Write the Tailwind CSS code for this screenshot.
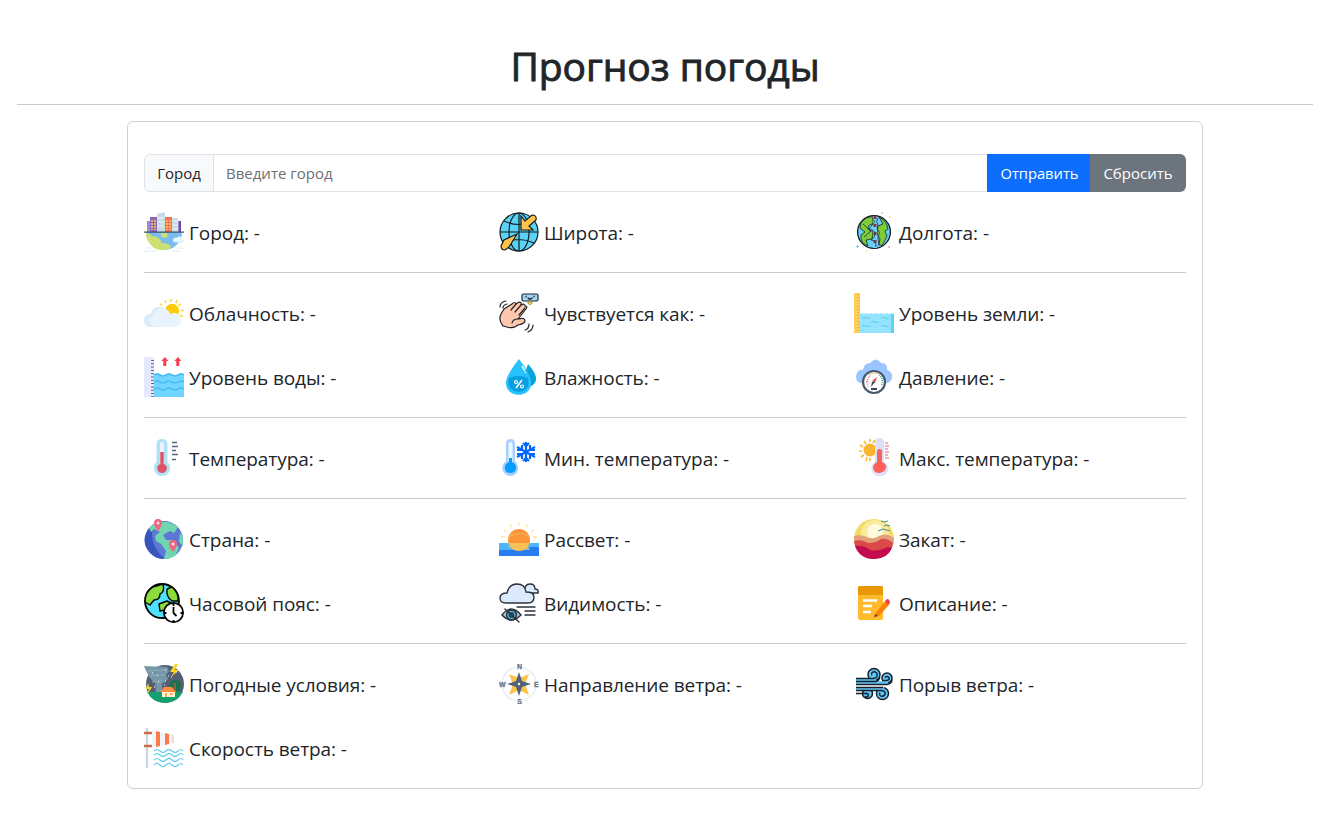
<!DOCTYPE html>
<html lang="ru">
<head>
<meta charset="utf-8">
<title>Прогноз погоды</title>
<script src="https://cdn.jsdelivr.net/npm/@tailwindcss/browser@4"></script>
</head>
<body class="bg-white text-[#212529] font-['Open_Sans','Noto_Sans',sans-serif]">
<div class="w-[1330px] pl-[17px] pr-[17px] pt-10">
<h1 class="text-center text-[39px] leading-[48px] h-12 font-normal tracking-[-0.05px] pt-[2px] [-webkit-text-stroke:0.9px_#212529]">Прогноз погоды</h1>
<hr class="mt-4 border-[#c8c9ca]">
<main class="mx-auto mt-4 w-[1076px] h-[668px] rounded-md border border-[#d0d1d3] px-4 pt-8">
<form class="flex h-[38px] text-[15px] leading-[36px]">
<label class="w-[70px] rounded-l-md border border-[#dee2e6] bg-[#f8f9fa] text-center">Город</label>
<div class="flex-1 border-y border-[#dee2e6] px-3 text-[#6b7075] text-[15px]">Введите город</div>
<button type="button" class="w-[103px] bg-[#0d6efd] text-white text-[14.7px] pl-0.5">Отправить</button>
<button type="button" class="w-24 rounded-r-md bg-[#6c757d] text-white">Сбросить</button>
</form>

<section class="mt-4 grid grid-cols-[331px_331px_332px] gap-x-6 gap-y-4 text-[19px] tracking-[-0.05px] [&>div]:flex [&>div]:h-12 [&>div]:items-center [&>div]:gap-[5px] [&_svg]:size-10 [&_svg]:shrink-0 [&_span]:pt-0.5 [&_span]:whitespace-nowrap">
<div><svg viewBox="0 0 40 40"><path d="M2 20h36A18 18 0 0 1 2 20Z" fill="#7bbcf0"/><path d="M2 21q4 0 6 3l5 1q5 3 4 6 6 0 9 2 2 2-1 4-12 4-19-5Q2 27 2 21M17 21h6q2 4-2 5-5 0-4-5" fill="#cfe070"/><path d="M3 9h3v11H3zM34 9h3v11h-3z" fill="#a88bd0"/><path d="M35 9h2v11h-2z" fill="#6d4aa8"/><path d="M6 5h7v15H6z" fill="#8a68b7"/><path d="M13 2l8-2v20h-8zM28 6h6v14h-6z" fill="#c9dce6"/><path d="M21 5h7v15h-7z" fill="#f4704f"/><path d="M13 6h7m-7 4h7m-7 4h7m8-5h6m-6 4h6m-6 4h6" stroke="#e9f2f6"/><path d="M8 8v10m3-10v10m12-10v10m3-10v10" stroke="#ffd65c" stroke-width="1.4" stroke-dasharray="2 1"/><path d="M0 20.2h40" stroke="#3b5568" stroke-width="1.3"/><path d="M29 28q1-3 4-2 2-3 4 0 3 1 2 4h-8q-2 0-2-2M2 36h6M0 39h5m1 0h6m16 0h8m-3-3h6" fill="#eaf8ff" stroke="#d6edf7"/></svg><span>Город: -</span></div>
<div><svg viewBox="0 0 40 40" fill="none" stroke="#151a20" stroke-width="1.2"><circle cx="20" cy="20" r="19" fill="#5ad2f3"/><path d="M20 1v38M1 20h38M5 9q15 7 30 0M5 31q15-7 30 0"/><ellipse cx="20" cy="20" rx="10" ry="19"/><path d="M22 4v14h12l-4-4 7-6q1-5-4-5l-7 6zM18 22 5 28l-3 6q0 4 4 4l4-3z" fill="#ffc34d"/></svg><span>Широта: -</span></div>
<div><svg viewBox="0 0 40 40" fill="none"><circle cx="20" cy="20" r="16.4" fill="#64cef5" stroke="#121c25" stroke-width="1.3"/><path d="M7 11Q12 4 19 5v7q-5 0-5 5l5 3-1 7-6 1 2 6Q6 31 7 23l4-3-5-4ZM25 5q8 4 9 12l-3 2 2 5-5 10-3-2 1-5-3-5 1-8 5-2z" fill="#7dcb36" stroke="#152c20" stroke-width=".8"/><path d="M19 4v32h4V4z" fill="#79ccf5"/><path d="M21 4v32" stroke="#8c3444" stroke-width="3" stroke-dasharray="3 5"/><path d="M18 7q5 3 0 6l-3 4q6 1 6 5t-4 6q5 0 5 7M24 6q-3 3 0 7l-1 4q4 3 1 8l1 9M9 12l8 7-7 6" stroke="#183548" stroke-width=".8"/><path d="M28 0v2" stroke="#9ec97b"/><path d="M36 4v2M12 39h1" stroke="#ffc35b"/><path d="M3.500 33v3M2 34.500h3" stroke="#6ccaf5"/><path d="M35 34v2" stroke="#ff6a9a"/></svg><span>Долгота: -</span></div>
</section>
<hr class="mt-4 mb-4 border-[#c8c9ca]">
<section class="grid grid-cols-[331px_331px_332px] gap-x-6 gap-y-4 text-[19px] tracking-[-0.08px] [&>div]:flex [&>div]:h-12 [&>div]:items-center [&>div]:gap-[5px] [&_svg]:size-10 [&_svg]:shrink-0 [&_span]:pt-0.5 [&_span]:whitespace-nowrap">
<div><svg viewBox="0 0 40 40"><circle cx="28" cy="18" r="7.200" fill="#ffcc08"/><path d="M21 7.500l1 2.500m5-4v3m6-2-1 3m5 1-3 2m3 4.500h3m-4 5 3 1M16 10.500l2 2" stroke="#ffd32e" stroke-width="1.500"/><path d="M7 34C-3 34-2 21 7 21 9 12 23 12 26 21q8-3 10 3 4 10-7 10z" fill="#e8f3fe"/><path d="M7 34C-3 34-2 21 7 21 8 14 15 13 19 15 9 16 13 22 6 24q-3 7 6 10z" fill="#dceafb"/></svg><span>Облачность: -</span></div>
<div><svg viewBox="0 0 40 40" fill="none" stroke="#202329" stroke-width="1.2" stroke-linecap="round" stroke-linejoin="round"><path d="M4 33Q-1 27 2 21l3-5 8-5q3-3 4 0l3-2q3 0 2 3 4-2 4 1 3 0 1 3l-8 10q7-2 7 2-1 3-7 4-5 4-11 2z" fill="#ffc8ac"/><path d="m12 17 5-6m-1 8 6-7m-2 10 6-7M19 26q-5 0-6 4"/><rect x="23" y="1" width="16" height="7" rx="1.5" fill="#a3d7f4"/><path d="M27 3v1m8-1v1m-6 1q2 2 4 0"/><path d="M29 9v1q2 3 4 0V9z" fill="#ffe368" stroke="#b09a48"/><path d="M1 14q0-5 6-6M4 15q0-3 4-4M26 37q4-1 4-6m-1 8q5-2 5-7"/></svg><span>Чувствуется как: -</span></div>
<div><svg viewBox="0 0 40 40"><path d="M0 0h6v40H0z" fill="#ffd057"/><path d="M4.5 1v39" stroke="#f3a743" stroke-width="2" stroke-dasharray="1 2"/><path d="M6 21l2-1 2 1 2-1 2 1 3-1 2 1 3-1 3 1 2-1 3 1 3-1 2 1 3-1 2 1v19H6z" fill="#95e4ff"/><path d="M37 21h3v19h-3z" fill="#5bd4f5"/><path d="M8 25q2-1 4 0t4 0m11 0q2-1 4 0t4 0m-18 4q2-1 4 0t4 0M8 33q2-1 4 0t4 0m11 0q2-1 4 0t4 0" fill="none" stroke="#5bcdea"/></svg><span>Уровень земли: -</span></div>
<div><svg viewBox="0 0 40 40"><path d="M0 0h10v40H0z" fill="#e6e9fd"/><path d="M8.5 3v37" stroke="#656486" stroke-width="3" stroke-dasharray="1 2.3"/><path d="M10 17q3-2 6 0t6 0 6 0 6 0 6 0v23H10z" fill="#70d5ff"/><path d="M10 18q3-2 6 0t6 0 6 0 6 0 6 0M10 25q3-2 6 0t6 0 6 0 6 0 6 0M10 32q3-2 6 0t6 0 6 0 6 0 6 0" fill="none" stroke="#37b5ec" stroke-width="1.2"/><path d="m21 0 3.3 4h-2v5h-3V4h-2zM34 0l3.3 4h-2v5h-3V4h-2z" fill="#fb3b52"/></svg><span>Уровень воды: -</span></div>
<div><svg viewBox="0 0 40 40"><path d="M29 7q9 10 8 16-1 5-7 7-7-9-1-23" fill="#07a3db"/><path d="M20 2Q8 17 7 25c-1 17 26 17 25 0Q31 16 20 2" fill="#27c3ff"/><path d="M10 21q10-4 19 0 3 13-9.500 14Q7 34 10 21" fill="#079fe0"/><path d="m17 31 6-8" stroke="#fff" stroke-width="1.5"/><circle cx="17" cy="25" r="1.5" fill="none" stroke="#fff" stroke-width="1.2"/><circle cx="23" cy="29.500" r="1.5" fill="none" stroke="#fff" stroke-width="1.2"/><path d="m23 9 3 5m.5 1v1" stroke="#dff7ff" stroke-width="1.6"/></svg><span>Влажность: -</span></div>
<div><svg viewBox="0 0 40 40"><path d="M6 26Q0 23 3 16q2-4 6-3 1-7 7-7 6-7 11 0 7 0 6 7 6 2 5 8-1 4-5 5z" fill="#9bc5ff"/><circle cx="20" cy="25" r="11" fill="#fff" stroke="#46596c" stroke-width="2.200"/><path d="M13 25a7 7 0 0 1 3-6" stroke="#ef6570" fill="none" stroke-width="1.4" stroke-dasharray="1 1"/><path d="M15 18a8 8 0 0 1 9-1" stroke="#efa735" fill="none" stroke-width="1.4" stroke-dasharray="1 1"/><path d="M25 18a8 8 0 0 1 2 11" stroke="#38af87" fill="none" stroke-width="1.4" stroke-dasharray="1 1"/><path d="M13 25q0 4 2 6" stroke="#ef6570" fill="none" stroke-dasharray="1 1"/><path d="m23 20-5 4 3 2z" fill="#e24a4e"/><path d="m21 25-4 5 1-5M17 31h6v2h-6z" fill="#334a60"/></svg><span>Давление: -</span></div>
</section>
<hr class="mt-4 mb-4 border-[#c8c9ca]">
<section class="grid grid-cols-[331px_331px_332px] gap-x-6 text-[19px] tracking-[-0.05px] [&>div]:flex [&>div]:h-12 [&>div]:items-center [&>div]:gap-[5px] [&_svg]:size-10 [&_svg]:shrink-0 [&_span]:pt-0.5 [&_span]:whitespace-nowrap">
<div><svg viewBox="0 0 40 40"><path d="M12.500 6q0-5 5.500-5t5.500 5v18q4 4 2 9-2 5-7.500 5T10.500 33q-2-5 2-9z" fill="#b2e1f7"/><path d="M16 6q0-2 2-2t2 2v22h-4z" fill="#eef1f7"/><path d="M16.300 14h3.400v12q4 2 3 5-1 4-4.700 4t-4.700-4q-1-3 3-5z" fill="#df5265"/><path d="M28 4.500h5m-5 4h6m-6 4h4m-4 4h6m-6 5h4" stroke="#566a85" stroke-width="1.400"/></svg><span>Температура: -</span></div>
<div><svg viewBox="0 0 40 40"><path d="M7 6q0-5 4.500-5T16 6v17q4 4 3 9-2 6-7.500 6T3.500 32Q2.500 27 7 23z" fill="#a6d0ff"/><path d="M9.500 6q0-2 2-2t2 2v18h-4z" fill="#eef6ff"/><path d="M10 20h3v4q5 2 4 7-1 4-5.500 4T6 31q-1-5 4-7z" fill="#079cff"/><g stroke="#0566ff" stroke-width="2.200" fill="none"><path d="M27 4v20M18 9l18 10M36 9 18 19"/><path d="m24 5 3 3 3-3m-6 18 3-3 3 3M18 12l5 0 0-5m13 5h-5V7M18 16h5v5m13-5h-5v5"/></g></svg><span>Мин. температура: -</span></div>
<div><svg viewBox="0 0 40 40"><circle cx="16" cy="12" r="6.500" fill="#fbb62e"/><path d="M16 1v3m-6-1 2 3M6 7l3 2M5 13h3m-1 6 3-2m2 6 1-4m3 1v3m5-21-2 3" stroke="#fbb62e" stroke-width="1.600"/><path d="M21 4q0-4 4.500-4T30 4v20q6 3 4 9-2 5-8.500 5T18 33q-2-6 3-9z" fill="#dcdff7"/><path d="M23 13q0-2 2.500-2t2.500 2v11q5 2 4 6t-6.500 5Q20 35 19 30q0-4 4-6z" fill="#fc6058"/><path d="M31 5h3m-3 3h4m-4 3h3m-3 3h4m-4 3h3m-3 3h4" stroke="#f0626c" stroke-width="1.200"/></svg><span>Макс. температура: -</span></div>
</section>
<hr class="mt-4 mb-4 border-[#c8c9ca]">
<section class="grid grid-cols-[331px_331px_332px] gap-x-6 gap-y-4 text-[19px] tracking-[-0.05px] [&>div]:flex [&>div]:h-12 [&>div]:items-center [&>div]:gap-[5px] [&_svg]:size-10 [&_svg]:shrink-0 [&_span]:pt-0.5 [&_span]:whitespace-nowrap">
<div><svg viewBox="0 0 40 40"><circle cx="20" cy="21" r="19" fill="#5b78d5"/><path d="M5 9Q-3 20 3 30q6 10 18 10Q7 29 8 12z" fill="#3655bd"/><path d="M5 9q12-10 24-4l5 3-4 6-4-2-7 4 3 5 8 0 5 8-4 8-7 3h-4l2-8-5-7-5-3-1-5 5-4-6-3-3 3zM36 14q4 4 3 13l-4-4z" fill="#72d5b1"/><path d="M14 12q-4-5-4-8 0-4 4-4t4 4q0 3-4 8M29 33q-4-5-4-8 0-4 4-4t4 4q0 3-4 8" fill="#ef6583"/><circle cx="14" cy="4" r="1.500" fill="#ffe4e8"/><circle cx="29" cy="25" r="1.500" fill="#ffe4e8"/></svg><span>Страна: -</span></div>
<div><svg viewBox="0 0 40 40"><path d="M20 3.500v3M11 5.500l2 3m16-3-2 3M5 11l3 2m27-2-3 2M2 18h4m28 0h4" stroke="#ffe48b" stroke-width="1.300"/><circle cx="20" cy="21" r="11" fill="#fb963b"/><path d="M10.500 17q9.500-5 19 0" stroke="#fcab4c" stroke-width="1.500" fill="none"/><path d="M0 24h40v13H0z" fill="#287cf0"/><path d="M0 24h40v4H30v3H0z" fill="#4eb4fb"/><path d="M9.500 24h21q-2 8-10.500 8-8 0-10.500-8" fill="#ffc251"/><path d="M9 28h10m3 2h9" stroke="#c5c681"/></svg><span>Рассвет: -</span></div>
<div><svg viewBox="0 0 40 40"><circle cx="20" cy="20" r="20" fill="#f5db65"/><circle cx="21" cy="15" r="14" fill="#faea9b"/><circle cx="21" cy="13" r="8" fill="#fffbdc"/><path d="M0 17q7-2 13 1 6 3 12-1 7-4 15 2a20 20 0 0 1-40 1z" fill="#e2a17b"/><path d="M0 22q8-2 14 2 8 0 13-4 6-1 12 4-2 15-20 16Q2 38 0 22" fill="#db4a48"/><path d="M1 27q9-1 15 4 8 2 18-3l4 1q-5 11-18 11Q6 40 1 27" fill="#c40b50"/><path d="m27 2 3 1 4-1m-4 5 3-1 3 1m-12 5 5-2 7 2" stroke="#338e94" fill="none"/></svg><span>Закат: -</span></div>
<div><svg viewBox="0 0 40 40" fill="none" stroke="#050505" stroke-width="1.800" stroke-linejoin="round"><circle cx="18" cy="18" r="17" fill="#51e0ff"/><path d="M9 4q-8 5-8 15l5 3 4-5q6 0 6-6 5-2 3-10zM23 6l5-2q7 6 6 14h-6q-6-4-5-12M15 21l8-3 4 2-6 7-5 1z" fill="#8add3c" stroke-width="1.400"/><circle cx="29.500" cy="29.500" r="9.600" fill="#fff"/><path d="M29.500 24v6l3 3m-3-13v3m0 14v3m-10-10h3m14 0h3"/></svg><span>Часовой пояс: -</span></div>
<div><svg viewBox="0 0 40 40" fill="none" stroke="#2d3038" stroke-width="1.400" stroke-linecap="round"><path d="M25 10Q25 1 31 1q5 0 5 5 4 0 3 4h-9" fill="#dceafe"/><path d="M7 20q-6 0-6-5t7-5Q10 1 18 1q8 0 9 8 8 0 8 5 0 6-6 6z" fill="#dceafe"/><path d="M18 24h18m-10 4h10m-10 4h10"/><path d="M3 32q9-12 19 0-10 10-19 0" fill="#b3cdda"/><circle cx="12.500" cy="32" r="5" fill="#52a9d8"/><circle cx="12.500" cy="32" r="2"/><path d="m6 26 14 13"/></svg><span>Видимость: -</span></div>
<div><svg viewBox="0 0 40 40"><rect x="4" y="3" width="25" height="34" rx="2" fill="#ffba2e"/><path d="M4 12V5q0-2 2-2h21q2 0 2 2v7z" fill="#e99803"/><path d="M9 17.500h14M9 23h9M9 29h8" stroke="#fff" stroke-width="2.300"/><path d="m21 31 10-13 4 4-10 11-4 1z" fill="#fb8508"/><path d="m31 18 2-2q3 0 3 4l-2 2z" fill="#ed404b"/><path d="m21 31 3 2-4 1z" fill="#61444c"/></svg><span>Описание: -</span></div>
</section>
<hr class="mt-4 mb-4 border-[#c8c9ca]">
<section class="grid grid-cols-[331px_331px_332px] gap-x-6 gap-y-4 text-[19px] tracking-[-0.08px] [&>div]:flex [&>div]:h-12 [&>div]:items-center [&>div]:gap-[5px] [&_svg]:size-10 [&_svg]:shrink-0 [&_span]:pt-0.5 [&_span]:whitespace-nowrap">
<div><svg viewBox="0 0 40 40"><circle cx="21" cy="20" r="19" fill="#545f73"/><path d="M3 28h36q-6 11-18 11T3 28" fill="#12a06c"/><path d="M0 2l23 1 2 4-3 4 2 4-6 5v8h-6l-1-9-5-5-4-7z" fill="#7697a8"/><path d="m3 7 18-1M5 12l16-1M8 18l10-2" stroke="#8eabb8"/><path d="m31 0-5 8h4l-3 5 8-7h-4l3-6zM4 19l-2 6h3l-2 6 5-8H5z" fill="#ffd522"/><circle cx="31" cy="22" r="6" fill="#16734e"/><path d="M31 19v10" stroke="#ac6246" stroke-width="1.500"/><path d="M18 27h13v6H18z" fill="#fff2df"/><path d="m16 28 4-5h8l4 5z" fill="#fe8d40"/><path d="M21 29h2v4h-2zM26 29h3v2h-3z" fill="#fbad54"/><path d="M8 9h1m4 2h1m7-5h1m2 6h1m-11 6h1m-5 5h1m10-6h1m5-4h1m-8 8h1m11-13h1" stroke="#fff" stroke-width="1.200"/></svg><span>Погодные условия: -</span></div>
<div><svg viewBox="0 0 40 40"><circle cx="20" cy="20" r="17" fill="none" stroke="#e3eef9" stroke-width="1.300"/><path d="M17 0h7v7h-7zM17 34h7v6h-7zM0 17h7v6H0zM34 17h6v6h-6z" fill="#fff"/><path d="m10 10 10 4 10-4-4 10 4 11-10-5-10 5 4-11z" fill="#ffc34d"/><path d="m20 8 3 9 9 3-9 3-3 9-3-9-9-3 9-3z" fill="#53627b"/><circle cx="20" cy="20" r="1.200" fill="#fff"/><g fill="#64758d" stroke="#64758d" stroke-width=".3" font-family="Liberation Sans" font-size="7" font-weight="bold" text-anchor="middle"><text x="20.500" y="5.300">N</text><text x="20.500" y="39.700">S</text><text x="3.300" y="22.500">W</text><text x="37.200" y="22.500">E</text></g></svg><span>Направление ветра: -</span></div>
<div><svg viewBox="0 0 40 40" fill="none"><g stroke="#171f29" stroke-width="1.500"><circle cx="20" cy="10.500" r="6" fill="#62c8fa"/><circle cx="33" cy="14" r="5" fill="#62c8fa"/><circle cx="28.500" cy="29.500" r="6" fill="#62c8fa"/><circle cx="13.500" cy="29.500" r="5" fill="#62c8fa"/></g><path d="M2 14h20v3h12v3H2zM2 23h28v4H2z" fill="#62c8fa"/><g stroke="#171f29" stroke-width="1.400"><path d="M2 14.500h18q4-1 3-5-2-3-5-1-1 2 0 3M2 17.500h20q3-1 4-4M2 20.500h31q5-1 5-5M28 16.500h5q3-1 2-3-2-2-4 0M2 23.500h27M2 26.500h26q4 1 3 4-2 3-5 1-1-1 0-3M2 29.500h11q2 1 1 3-1 1-3 0"/></g></svg><span>Порыв ветра: -</span></div>
<div><svg viewBox="0 0 40 40"><path d="M3 0v40" stroke="#c8d6e2" stroke-width="2.200"/><path d="M0 5h8M0 18h8" stroke="#cd6b4b" stroke-width="2.500"/><path d="m8 3 22 4v8L8 19z" fill="#f0f3f7"/><path d="m12 3 4 1v14l-4 1zM21 5l4 1v10l-4 1z" fill="#fc7948"/><path d="M28 7h2v8h-2z" fill="#eddcdd"/><path d="M10 23q3-3 6 0t6 0 6 0 6 0 5 0M10 27q3-3 6 0t6 0 6 0 6 0 5 0M10 32q3-3 6 0t6 0 6 0 6 0 5 0M10 37q3-3 6 0t6 0 6 0 6 0 5 0" fill="none" stroke="#63cee9" stroke-width="1.200"/></svg><span>Скорость ветра: -</span></div>
</section>
</main>
</div>
</body>
</html>
